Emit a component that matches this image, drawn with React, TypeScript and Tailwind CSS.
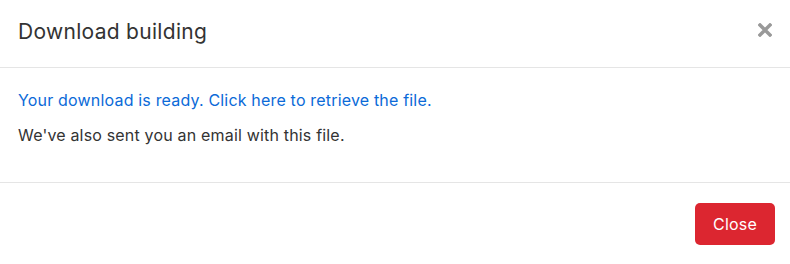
import React from 'react';

export default function App() {
  return (
    <div className="w-[790px] h-[264px] bg-white text-[#212529] font-['Inter','Liberation_Sans',sans-serif]">
      {/* Header */}
      <div className="h-[68px] flex items-center justify-between pl-[18px] pr-[16px] border-b border-[#e5e5e5]">
        <h2 className="text-[21px] tracking-[0.3px] leading-[30px] text-[#333] -mt-[4px]">Download building</h2>
        <button className="text-[#999] -mt-[8px] mr-[2px]" aria-label="Close">
          <svg width="14" height="14" viewBox="0 0 14 14">
            <path d="M2 2 L12 12 M12 2 L2 12" stroke="currentColor" strokeWidth="3.4" strokeLinecap="square" />
          </svg>
        </button>
      </div>

      {/* Body */}
      <div className="h-[115px] pl-[18px] pr-4 pt-[20px] border-b border-[#e5e5e5] text-[16px] leading-[24px] tracking-[0.18px]">
        <a href="#" className="block text-[#0b6ad8] mb-[11px]">
          Your download is ready. Click here to retrieve the file.
        </a>
        <p className="text-[#333]">We've also sent you an email with this file.</p>
      </div>

      {/* Footer */}
      <div className="flex justify-end pr-[15px] pt-[20px]">
        <button className="w-[80px] h-[42px] rounded-[5px] bg-[#dc2630] text-white text-[16px] tracking-[0.2px]">
          Close
        </button>
      </div>
    </div>
  );
}
